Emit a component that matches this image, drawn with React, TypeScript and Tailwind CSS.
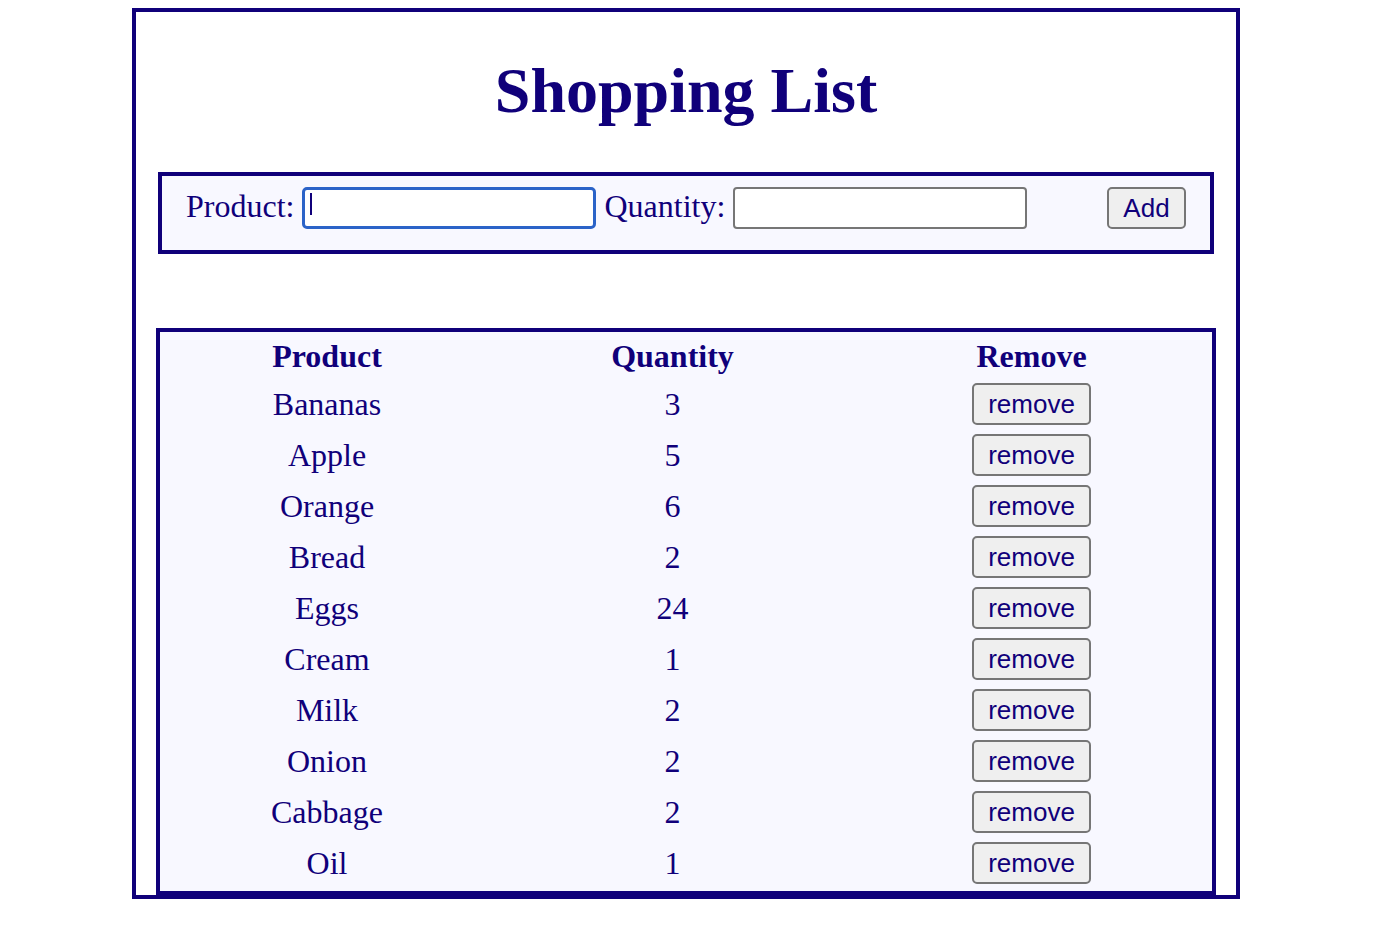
import { useState } from 'react';

interface Item {
  product: string;
  quantity: number;
}

const initialItems: Item[] = [
  { product: 'Bananas', quantity: 3 },
  { product: 'Apple', quantity: 5 },
  { product: 'Orange', quantity: 6 },
  { product: 'Bread', quantity: 2 },
  { product: 'Eggs', quantity: 24 },
  { product: 'Cream', quantity: 1 },
  { product: 'Milk', quantity: 2 },
  { product: 'Onion', quantity: 2 },
  { product: 'Cabbage', quantity: 2 },
  { product: 'Oil', quantity: 1 },
];

const buttonClass =
  "h-[42px] bg-[#efefef] border-2 border-[#767676] rounded-[5px] text-[26px] leading-none text-[#10007a] font-['Liberation_Sans',Arial,sans-serif] cursor-pointer";

export default function App() {
  const [items, setItems] = useState<Item[]>(initialItems);
  const [product, setProduct] = useState('');
  const [quantity, setQuantity] = useState('');

  const handleAdd = () => {
    if (!product.trim()) return;
    setItems([...items, { product: product.trim(), quantity: Number(quantity) || 1 }]);
    setProduct('');
    setQuantity('');
  };

  const handleRemove = (index: number) => {
    setItems(items.filter((_, i) => i !== index));
  };

  return (
    <div className="bg-white min-h-screen pt-[8px] font-['Liberation_Serif','Times_New_Roman',serif] text-[#10007a]">
      <div className="ml-[132px] w-[1108px] border-4 border-[#10007a] px-[22px]">
        <h1 className="mt-[42px] mb-[44px] h-[74px] text-center text-[64px] leading-[74px] font-bold">
          Shopping List
        </h1>

        {/* Add item form */}
        <div className="h-[82px] border-4 border-[#10007a] bg-[#f8f8ff] flex items-start pt-[11px] pl-[24px] pr-[24px]">
          <div className="flex items-center h-[42px] text-[32px]">
            <label className="leading-[37px] mr-[8px] -mt-[3px]">Product:</label>
            <div className="relative">
              <input
                type="text"
                value={product}
                onChange={(e) => setProduct(e.target.value)}
                className="block w-[294px] h-[42px] bg-white border-[3px] border-[#2b63c8] rounded-[5px] px-[5px] text-[26px] outline-none caret-transparent"
              />
              {/* text caret of the focused field */}
              {!product && (
                <span className="absolute left-[8px] top-[6px] w-[2px] h-[22px] bg-[#10007a]" />
              )}
            </div>
            <label className="leading-[37px] ml-[8px] mr-[8px] -mt-[3px]">Quantity:</label>
            <input
              type="text"
              value={quantity}
              onChange={(e) => setQuantity(e.target.value)}
              className="block w-[294px] h-[42px] bg-white border-2 border-[#767676] rounded-[4px] px-[5px] text-[26px] outline-none"
            />
          </div>
          <button onClick={handleAdd} className={`${buttonClass} ml-auto w-[79px]`}>
            Add
          </button>
        </div>

        {/* List */}
        <div className="mt-[74px] -mx-[2px] border-4 border-[#10007a] bg-[#f8f8ff] pb-[3px] text-[32px]">
          <div className="grid grid-cols-[334px_357px_1fr] h-[46px] pt-[2px] items-center font-bold leading-[37px] text-center">
            <div>Product</div>
            <div>Quantity</div>
            <div>Remove</div>
          </div>
          {items.map((item, i) => (
            <div
              key={item.product + i}
              className="grid grid-cols-[334px_357px_1fr] h-[51px] items-center leading-[37px] text-center"
            >
              <div className="pt-[2px]">{item.product}</div>
              <div className="pt-[2px]">{item.quantity}</div>
              <div className="flex justify-center">
                <button onClick={() => handleRemove(i)} className={`${buttonClass} w-[119px]`}>
                  remove
                </button>
              </div>
            </div>
          ))}
        </div>
      </div>
    </div>
  );
}
